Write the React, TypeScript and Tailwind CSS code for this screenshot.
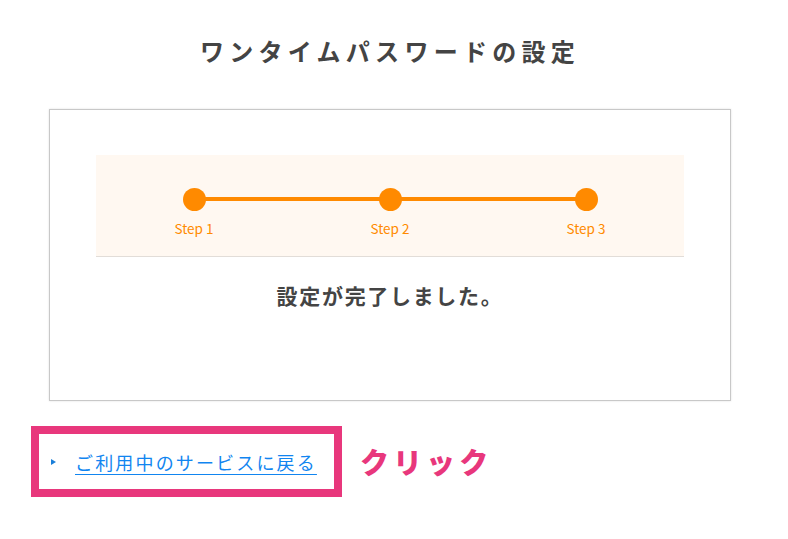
const STEPS = ["Step 1", "Step 2", "Step 3"];

const jp = { fontFamily: '"Noto Sans CJK JP", "Noto Sans", sans-serif' };

export default function App() {
  return (
    <div className="min-h-[539px] bg-white text-[#444]" style={jp}>
      <div className="ml-[49px] w-[682px] pt-[33px]">
        <h1 className="text-center text-[24px] font-bold leading-[36px] tracking-[0.22em] text-[#444]">
          ワンタイムパスワードの設定
        </h1>

        <div className="mt-[40px] h-[292px] border border-[#c8c8c8] px-[46px] pt-[45px] shadow-[0_0_2px_rgba(0,0,0,0.12)]">
          <div className="border-b border-[#e2ddd8] bg-[#fff8f1]">
            <ol className="relative grid grid-cols-3 pt-[33px] pb-[19px]">
              <div className="absolute left-[98px] right-[98px] top-[42px] h-[4px] bg-[#ff8a00]" />
              {STEPS.map((s) => (
                <li key={s} className="relative flex flex-col items-center">
                  <span className="h-[23px] w-[23px] rounded-full bg-[#ff8a00]" />
                  <span className="mt-[8px] text-[13.5px] leading-[18px] text-[#ff8a00]">{s}</span>
                </li>
              ))}
            </ol>
          </div>
          <p className="mt-[24px] text-center text-[21px] font-bold leading-[28px] tracking-[0.08em] text-[#444]">
            設定が完了しました。
          </p>
        </div>
      </div>

      <div className="ml-[31px] mt-[25px] flex items-center">
        <div className="flex h-[71px] w-[311px] items-center border-[8px] border-[#e8377c] pl-[12px]">
          <span className="mr-[19px] h-0 w-0 border-y-[3.5px] border-l-[5px] border-y-transparent border-l-[#1a7fd9]" />
          <a
            href="#"
            className="text-[18px] leading-[24px] tracking-[0.12em] text-[#1185f0] underline underline-offset-[4px]"
          >
            ご利用中のサービスに戻る
          </a>
        </div>
        <span className="ml-[18px] text-[29px] font-black tracking-[0.14em] text-[#e8377c]">
          クリック
        </span>
      </div>
    </div>
  );
}
